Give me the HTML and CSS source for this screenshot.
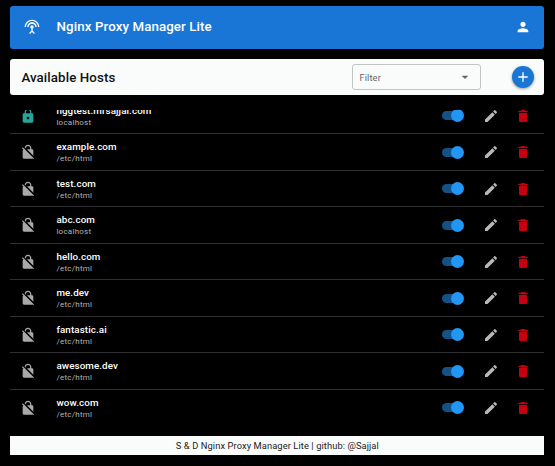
FILE: index.html
```html
<!DOCTYPE html>
<html lang="en">
<head>
<meta charset="utf-8">
<title>Nginx Proxy Manager Lite</title>
<link rel="stylesheet" href="styles.css">
</head>
<body>
<svg class="sprite" aria-hidden="true">
  <symbol id="lock" viewBox="0 0 24 24"><path d="M18 8h-1V6c0-2.76-2.24-5-5-5S7 3.24 7 6v2H6c-1.1 0-2 .9-2 2v10c0 1.1.9 2 2 2h12c1.1 0 2-.9 2-2V10c0-1.1-.9-2-2-2zm-6 9c-1.1 0-2-.9-2-2s.9-2 2-2 2 .9 2 2-.9 2-2 2zm3.1-9H8.9V6c0-1.71 1.39-3.1 3.1-3.1 1.71 0 3.1 1.39 3.1 3.1v2z"/></symbol>
  <symbol id="nolock" viewBox="0 0 24 24"><path d="M21 21.78L4.22 5 3 6.22l2.04 2.04C4.42 8.6 4 9.25 4 10v10c0 1.1.9 2 2 2h12c.23 0 .45-.05.66-.12L19.78 23 21 21.78zM8.9 6c0-1.71 1.39-3.1 3.1-3.1s3.1 1.39 3.1 3.1v2h-4.66L20 17.56V10c0-1.1-.9-2-2-2h-1V6c0-2.76-2.24-5-5-5-2.56 0-4.64 1.93-4.94 4.4L8.9 7.24V6z"/></symbol>
  <symbol id="edit" viewBox="0 0 24 24"><path d="M3 17.25V21h3.75L17.81 9.94l-3.75-3.75L3 17.25zM20.71 7.04c.39-.39.39-1.02 0-1.41l-2.34-2.34c-.39-.39-1.02-.39-1.41 0l-1.83 1.83 3.75 3.75 1.83-1.83z"/></symbol>
  <symbol id="trash" viewBox="0 0 24 24"><path d="M6 19c0 1.1.9 2 2 2h8c1.1 0 2-.9 2-2V7H6v12zM19 4h-3.5l-1-1h-5l-1 1H5v2h14V4z"/></symbol>
</svg>
<div class="app">
  <header class="topbar">
    <svg class="icon" viewBox="0 0 24 24"><path d="M12 5c-3.87 0-7 3.13-7 7h2c0-2.76 2.24-5 5-5s5 2.24 5 5h2c0-3.87-3.13-7-7-7zm1 9.29c.88-.39 1.5-1.26 1.5-2.29 0-1.38-1.12-2.5-2.5-2.5S9.5 10.62 9.5 12c0 1.02.62 1.9 1.5 2.29v3.3L7.59 21 9 22.41l3-3 3 3L16.41 21 13 17.59v-3.3zM12 1C5.93 1 1 5.93 1 12h2c0-4.97 4.03-9 9-9s9 4.03 9 9h2c0-6.07-4.93-11-11-11z"/></svg>
    <h1><span>Nginx Proxy Manager Lite</span></h1>
    <svg class="icon" viewBox="0 0 24 24"><path d="M12 12c2.21 0 4-1.79 4-4s-1.79-4-4-4-4 1.79-4 4 1.79 4 4 4zm0 2c-2.67 0-8 1.34-8 4v2h16v-2c0-2.66-5.33-4-8-4z"/></svg>
  </header>
  <section class="toolbar">
    <h2><span>Available Hosts</span></h2>
    <div class="filter"><span>Filter</span><svg class="icon" viewBox="0 0 24 24"><path d="M7 10l5 5 5-5z"/></svg></div>
    <button class="add" aria-label="Add host"><svg class="icon" viewBox="0 0 24 24"><path d="M19 13h-6v6h-2v-6H5v-2h6V5h2v6h6v2z"/></svg></button>
  </section>
  <main class="list">
    <ul>
      <li class="secure"><svg class="icon state"><use href="#lock"/></svg><div class="host"><b>nggtest.mrsajjal.com</b><small>localhost</small></div><i class="toggle"></i><svg class="icon edit"><use href="#edit"/></svg><svg class="icon trash"><use href="#trash"/></svg></li>
      <li><svg class="icon state"><use href="#nolock"/></svg><div class="host"><b>example.com</b><small>/etc/html</small></div><i class="toggle"></i><svg class="icon edit"><use href="#edit"/></svg><svg class="icon trash"><use href="#trash"/></svg></li>
      <li><svg class="icon state"><use href="#nolock"/></svg><div class="host"><b>test.com</b><small>/etc/html</small></div><i class="toggle"></i><svg class="icon edit"><use href="#edit"/></svg><svg class="icon trash"><use href="#trash"/></svg></li>
      <li><svg class="icon state"><use href="#nolock"/></svg><div class="host"><b>abc.com</b><small>localhost</small></div><i class="toggle"></i><svg class="icon edit"><use href="#edit"/></svg><svg class="icon trash"><use href="#trash"/></svg></li>
      <li><svg class="icon state"><use href="#nolock"/></svg><div class="host"><b>hello.com</b><small>/etc/html</small></div><i class="toggle"></i><svg class="icon edit"><use href="#edit"/></svg><svg class="icon trash"><use href="#trash"/></svg></li>
      <li><svg class="icon state"><use href="#nolock"/></svg><div class="host"><b>me.dev</b><small>/etc/html</small></div><i class="toggle"></i><svg class="icon edit"><use href="#edit"/></svg><svg class="icon trash"><use href="#trash"/></svg></li>
      <li><svg class="icon state"><use href="#nolock"/></svg><div class="host"><b>fantastic.ai</b><small>/etc/html</small></div><i class="toggle"></i><svg class="icon edit"><use href="#edit"/></svg><svg class="icon trash"><use href="#trash"/></svg></li>
      <li><svg class="icon state"><use href="#nolock"/></svg><div class="host"><b>awesome.dev</b><small>/etc/html</small></div><i class="toggle"></i><svg class="icon edit"><use href="#edit"/></svg><svg class="icon trash"><use href="#trash"/></svg></li>
      <li><svg class="icon state"><use href="#nolock"/></svg><div class="host"><b>wow.com</b><small>/etc/html</small></div><i class="toggle"></i><svg class="icon edit"><use href="#edit"/></svg><svg class="icon trash"><use href="#trash"/></svg></li>
    </ul>
  </main>
  <footer><span>S &amp; D Nginx Proxy Manager Lite | github: @Sajjal</span></footer>
</div>
</body>
</html>
```
FILE: styles.css
```css
* { box-sizing: border-box; }
body { margin: 0; background: #000; font-family: Roboto, sans-serif; overflow: hidden; }
.sprite { display: none; }
.app { display: flex; flex-direction: column; height: 466px; padding: 5.5px 10.7px 11.5px 10.4px; }
.icon { width: 16px; height: 16px; flex: none; display: block; fill: currentColor; }
h1, h2 { margin: 0; flex: 1; font-weight: 500; white-space: nowrap; }
.topbar { display: flex; align-items: center; height: 43.8px; padding: 0 13px 0 13.7px; background: #1976d6; border-radius: 3px; color: #fff; }
.topbar h1 { margin-left: 16.5px; font-size: 13.3px; letter-spacing: .1px; line-height: 20px; padding-bottom: 1px; }
.toolbar { display: flex; align-items: center; height: 36px; margin-top: 10.2px; padding: 0 10.3px 0 11px; background: #fafcfb; border-radius: 3px; }
.toolbar h2 { font-size: 13.3px; letter-spacing: .1px; color: #111; }
.filter { display: flex; align-items: center; justify-content: space-between; width: 129.5px; height: 26px; margin-right: 31px; padding: 0 7px 0 7px; border: 1px solid #c3c4c4; border-radius: 3px; color: #666; font-size: 9.3px; letter-spacing: .1px; }
.add { display: flex; align-items: center; justify-content: center; width: 22px; height: 22px; padding: 0; border: 0; border-radius: 50%; background: #1976d2; color: #fff; box-shadow: 0 1px 3px #0006; }
.list { height: 317px; margin-top: 15px; overflow: hidden; }
ul { margin: -12.7px 0 0; padding: 0; list-style: none; }
li { display: flex; align-items: center; height: 36.5px; padding: 0 13px 0 10px; border-bottom: 1px solid #303030; color: #b8b8b8; }
li:last-child { border-color: transparent; }
.state { color: #a9a9a9; }
.secure .state { color: #26a69a; }
.host { flex: 1; margin-left: 20px; display: flex; flex-direction: column; }
.host b { font-size: 9.8px; line-height: 13px; font-weight: 500; color: #fff; letter-spacing: .1px; }
.host small { font-size: 8px; line-height: 11px; color: #b5b5b5; letter-spacing: .25px; }
.toggle { display: flex; align-items: center; justify-content: flex-end; width: 21px; height: 9px; margin-right: 20px; border-radius: 5px; background: #125286; }
.toggle::after { content: ""; flex: none; width: 13px; height: 13px; margin-right: -1px; border-radius: 50%; background: #2196f3; }
.edit { margin-right: 16px; }
.trash { color: #c40011; }
footer { display: flex; align-items: center; justify-content: center; height: 18.5px; margin-top: auto; background: #fafcfb; color: #1a1a1a; font-size: 9.3px; letter-spacing: .1px; }
```
